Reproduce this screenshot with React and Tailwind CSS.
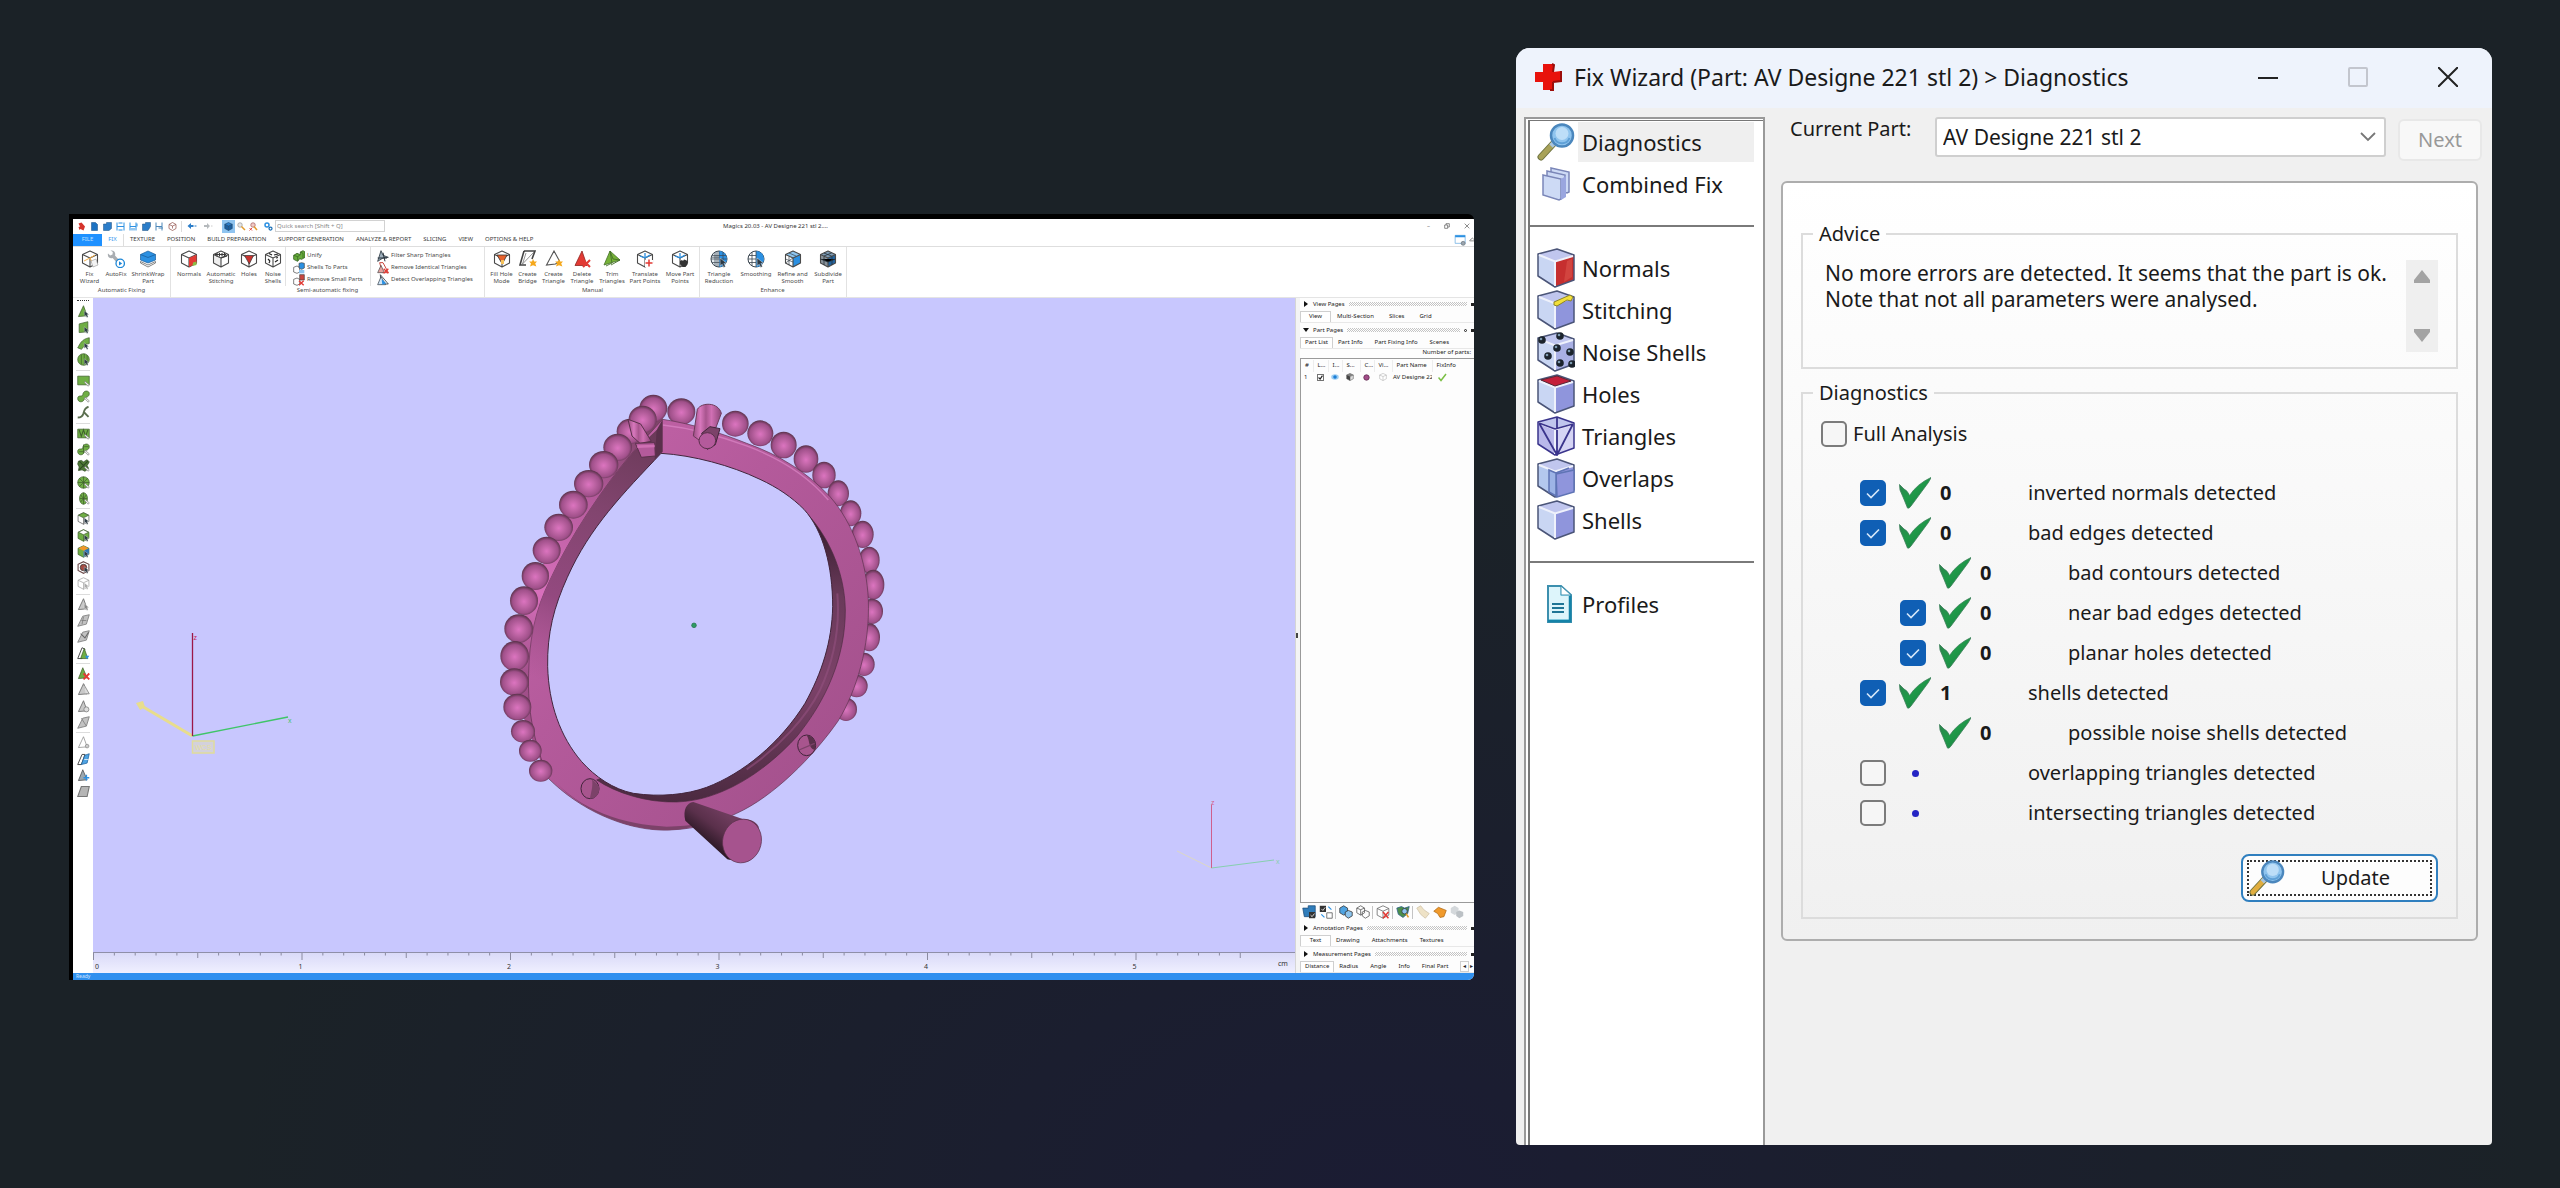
import React, { useState } from 'react';

/* ---------- small icons ---------- */

const HEX = 'M9 1 16.5 4.5V13L9 17 1.5 13V4.5Z';

const Cube = ({ top = '#fff', left = '#fff', right = '#fff', line = '#4a4a4a', size = 'w-[18px] h-[18px]', children }) => (
  <svg viewBox="0 0 18 18" className={`${size} shrink-0`}>
    <path d="M9 1 16.5 4.5 9 8 1.5 4.5Z" fill={top} />
    <path d="M1.5 4.5 9 8V17L1.5 13Z" fill={left} />
    <path d="M16.5 4.5 9 8V17L16.5 13Z" fill={right} />
    <path d={`${HEX}M1.5 4.5 9 8 16.5 4.5M9 8V17`} fill="none" stroke={line} strokeWidth="1.1" strokeLinejoin="round" />
    {children}
  </svg>
);

const Svg = ({ size = 'w-[18px] h-[18px]', children }) => (
  <svg viewBox="0 0 18 18" className={`${size} shrink-0`}>
    {children}
  </svg>
);

const Star = ({ x, y }) => (
  <path
    d={`M${x} ${y - 4}l1.2 2.6 2.8-.2-1.8 2.2 1.2 2.8-3.4-1.2-3 1.2 1-2.8-1.8-2.2 2.8.2Z`}
    fill="#f5a81c"
  />
);

const Cursor = ({ x = 10, y = 8, fill = '#2d3a45' }) => (
  <path d={`M${x} ${y}l6.5 5-2.6.4 1.6 3.2-1.8.8-1.5-3.2-2 1.8Z`} fill={fill} stroke="#fff" strokeWidth=".4" />
);

const ribbonIcons = {
  fixWizard: (
    <Cube>
      <path d="M3 11 9 8l5-3M9 8l3 6" stroke="#f5b04a" strokeWidth="1" fill="none" />
      <path d="M10 11l5-2 2 6-5 2Z" fill="#f3f3f3" stroke="#999" strokeWidth=".6" />
    </Cube>
  ),
  autoFix: (
    <Svg>
      <path d="M1 3.5 3.2 5.5 5.5 4.6 5.8 2 3.5 0.6C7 0 9 2.6 8 5.6L13 11l-2.4 2.4L5.6 8C2.6 9 .2 6.5 1 3.5Z" fill="#a9adb1" />
      <circle cx="13.2" cy="13.4" r="4.2" fill="#fff" stroke="#1c86d6" strokeWidth="1.3" />
      <path d="M12 11.3v4.2l3.2-2.1Z" fill="#1c86d6" />
    </Svg>
  ),
  shrinkWrap: (
    <Svg>
      <path d="M9 1 16.5 4.5V10L9 13 1.5 10V4.5Z" fill="#2b90e2" stroke="#1b5f9c" strokeWidth=".7" />
      <path d="M1.5 4.5 9 7.5 16.5 4.5" stroke="#1b5f9c" strokeWidth=".8" fill="none" />
      <path d="M1.5 11.5V13L9 17l7.500-4v-1.500L9 15Z" fill="#fff" stroke="#777" strokeWidth=".9" />
    </Svg>
  ),
  normals: (
    <Cube>
      <path d="M9 8 16.500 4.800V13.500L9 17Z" fill="#e23a34" />
      <path d="M13 12.500l3.500-1V15L12.500 16Z" fill="#8bbd45" />
    </Cube>
  ),
  stitching: (
    <Cube left="#eee">
      <path d="M3 4.500h11M5 3v3.500M7.500 3v3.500M10 3v3.500M12.500 3v3.500M9 8l6-2" stroke="#3a3a3a" strokeWidth="1.100" />
    </Cube>
  ),
  holes: (
    <Cube>
      <path d="M4.500 5.500h9L9.300 14Z" fill="#c8322e" stroke="#333" strokeWidth=".7" />
    </Cube>
  ),
  noise: (
    <Cube>
      <path d="M5 3.500l3 1.500M10 5l4-1M4 9l2 2M11 12l3-2M12 8l2-.5M5 13l1-2" stroke="#222" strokeWidth="1.200" />
    </Cube>
  ),
  fillHole: (
    <Cube>
      <path d="M4 5h10L9.300 14Z" fill="#e8622c" stroke="#333" strokeWidth=".8" />
      <path d="M8 10h3v4H8Z" fill="#f6c15a" />
    </Cube>
  ),
  bridge: (
    <Svg>
      <path d="M5 1h11L13 9M5 1 1 15h6" stroke="#444" strokeWidth="1.600" fill="none" />
      <path d="M7 3 3.500 14 15 2" stroke="#777" strokeWidth=".8" fill="none" />
      <Star x={14} y={13} />
    </Svg>
  ),
  createTriangle: (
    <Svg>
      <path d="M9 1 1.500 15l9-1 4-3Z" fill="#fff" stroke="#555" strokeWidth="1.100" />
      <Star x={14} y={13} />
    </Svg>
  ),
  deleteTriangle: (
    <Svg>
      <path d="M9 1 2 15.500h12Z" fill="#e23a34" stroke="#8f2621" strokeWidth=".8" />
      <path d="M10 10l7 7M17 10l-7 7" stroke="#e23a34" strokeWidth="2" />
    </Svg>
  ),
  trim: (
    <Svg>
      <path d="M7 1 17 10 1 15Z" fill="#76b238" stroke="#45702a" strokeWidth=".8" />
      <path d="M7 1 9 13 3 16M7 1l3 8 7 1-9 5" stroke="#45702a" strokeWidth=".9" fill="none" />
    </Svg>
  ),
  translate: (
    <Cube>
      <path d="M9 8V3M9 8l5-3M9 8 4 6" stroke="#2b90e2" strokeWidth="1.300" />
      <path d="M9 10h8v7H9Z" fill="#fff" />
      <path d="M13 9.500v7M9.500 13h7" stroke="#e23a34" strokeWidth="1.500" />
    </Cube>
  ),
  movePoints: (
    <Cube>
      <path d="M9 8V3M9 8l5-3M9 8 4 6" stroke="#2b90e2" strokeWidth="1.300" />
      <path d="M9 11l2-1 1 1 1-1.500 1.500.5 2 1v3.500L14.500 17h-3L9 14Z" fill="#333" />
    </Cube>
  ),
  reduction: (
    <Svg>
      <circle cx="9" cy="9" r="8" fill="#e4ebf0" stroke="#3b4650" />
      <path d="M9 1a8 8 0 0 1 0 16Z" fill="#2b90e2" />
      <path d="M9 1v16M5 2v14M13 2v14M1 9h16M2 5.500h14M2 12.500h14M7 1.500v15M2 7.200h7" stroke="#3b4650" strokeWidth=".7" />
      <Cursor />
    </Svg>
  ),
  smoothing: (
    <Svg>
      <circle cx="9" cy="9" r="8" fill="#fff" stroke="#3b4650" />
      <path d="M9 1a8 8 0 0 1 0 16Z" fill="#2b90e2" />
      <path d="M9 1v16M5 2v14M1 9h8M2 5.500h7M2 12.500h7" stroke="#3b4650" strokeWidth=".8" />
      <Cursor />
    </Svg>
  ),
  refine: (
    <Cube right="#2b90e2" top="#8cc4ee">
      <path d="M1.500 9 9 12M5 3 12 6M5 6.500V15M1.500 13 9 8" stroke="#3b4650" strokeWidth=".7" />
    </Cube>
  ),
  subdivide: (
    <Cube left="#8a939b" right="#2464a0" top="#7e9bb5">
      <path d="M1.500 9 9 12l7.500-3M5 3l7.500 3M5 6.500V15M13 6.500V15M12.500 3 5 6" stroke="#26323c" strokeWidth=".8" />
    </Cube>
  ),
};

const SMALL = 'w-[12px] h-[12px]';

const smallIcons = {
  unify: (
    <Svg size={SMALL}>
      <path d="M1 8l5-3 5 2V3l4-2 3 2v8l-5 3-3-1-3 4-6-3Z" fill="#67ab3c" stroke="#31601c" strokeWidth="1.200" />
      <path d="M1 8l6 2 4-3M7 10v6M11 3l4 2v7" stroke="#31601c" fill="none" />
    </Svg>
  ),
  shells: (
    <Svg size={SMALL}>
      <path d="M1 8l5-2 4 2v7l-4 2-5-2Z" fill="#fff" stroke="#444" />
      <path d="M9 2l4-1 4 1v7l-4 2-4-2Z" fill="#2b90e2" stroke="#444" />
      <path d="M9 12h8v5H9Z" fill="#8cc4ee" />
    </Svg>
  ),
  removeSmall: (
    <Svg size={SMALL}>
      <path d="M1 8l5-2 4 2v7l-4 2-5-2Z" fill="#fff" stroke="#444" />
      <path d="M10 1h7v8h-7Z" fill="#c9473f" stroke="#444" />
      <path d="M9 10l7 7M16 10l-7 7" stroke="#e23a34" strokeWidth="2" />
    </Svg>
  ),
  sharp: (
    <Svg size={SMALL}>
      <path d="M6 1 1 17l8-5 8-1-8-3Z" fill="#9fb0bd" stroke="#26323c" strokeWidth="1.200" />
      <path d="M9 4l3 13M1 12h14" stroke="#26323c" strokeWidth="1.500" />
    </Svg>
  ),
  identical: (
    <Svg size={SMALL}>
      <path d="M4 1h5l8 15H8Z" fill="#fff" stroke="#c9473f" strokeWidth="1.500" />
      <path d="M1 16 6 5l5 11Z" fill="#e4a29e" stroke="#444" />
      <path d="M10 10l7 7M17 10l-7 7" stroke="#e23a34" strokeWidth="2" />
    </Svg>
  ),
  overlapping: (
    <Svg size={SMALL}>
      <path d="M5 1 17 15H6Z" fill="#fff" stroke="#26323c" strokeWidth="1.200" />
      <path d="M1 16 6 4l7 12Z" fill="#cfe5f7" stroke="#26323c" />
      <path d="M7 8l7 6-6 2Z" fill="#2b90e2" />
    </Svg>
  ),
};

/* ---------- quick access bar ---------- */

const QUICK = 'w-[9px] h-[9px]';

const quickIcons = [
  { label: 'Magics', art: <path d="M3 3 9 1l7 8-3 8-6-3-2 2-2-6 3-1Z" fill="#d5332b" /> },
  { label: 'New', art: <path d="M3 1h8l4 4v12H3Z" fill="#1e73c2" stroke="#144d84" /> },
  { label: 'Load', art: <path d="M1 4h6V1h10v12l-5 4H1Z" fill="#2b7dc9" stroke="#1b4f80" /> },
  { label: 'Save', art: <path d="M2 1v16M16 1v16M2 9h14M5 2h8M5 16h8" stroke="#2b90e2" strokeWidth="2" fill="none" /> },
  { label: 'Save as', art: <path d="M2 1v16M14 1v16M2 9h12M6 12v5M10 12v5M16 3v6" stroke="#2b90e2" strokeWidth="2" fill="none" /> },
  { label: 'Import part', art: <path d="M1 4h6V1h10v8l-5 8H1Z" fill="#2b7dc9" stroke="#1b4f80" /> },
  { label: 'Save part', art: <path d="M2 1v16M14 1v16M2 9h12M7 12h9" stroke="#4d87b9" strokeWidth="2" fill="none" /> },
  { label: 'Unload part', art: <path d="M9 1 16 5v8l-7 4-7-4V5ZM2 5l7 3 7-3M9 8v5" stroke="#8d4b45" strokeWidth="1.400" fill="none" /> },
];

const ribbonTabs = [
  'TEXTURE',
  'POSITION',
  'BUILD PREPARATION',
  'SUPPORT GENERATION',
  'ANALYZE & REPORT',
  'SLICING',
  'VIEW',
  'OPTIONS & HELP',
];

const QuickAccessBar = () => (
  <div className="flex h-[15px] items-center pl-1 text-[6px] leading-[7px] text-[#444]">
    <div className="flex items-center gap-1">
      {quickIcons.map(({ label, art }) => (
        <button key={label} aria-label={label}>
          <Svg size={QUICK}>{art}</Svg>
        </button>
      ))}
    </div>
    <span className="mx-1 h-[11px] w-px bg-[#dcdcdc]" />
    <button aria-label="Undo" className="mr-1">
      <Svg size="w-[12px] h-[9px]">
        <path d="M0 8l7-6v4h5v4H7v4Z" fill="#2b7dc9" />
        <path d="M14 8h4" stroke="#2b7dc9" strokeWidth="2" />
      </Svg>
    </button>
    <button aria-label="Redo">
      <Svg size="w-[12px] h-[9px]">
        <path d="M13 8 7 2v4H1v4h6v4Z" fill="#b5b9bc" />
        <path d="M15 8h3" stroke="#ccc" strokeWidth="2" />
      </Svg>
    </button>
    <button aria-label="Shaded view" className="ml-2 grid h-[13px] w-[13px] place-items-center bg-[#8fc4f0]">
      <Cube size={QUICK} top="#2b7dc9" left="#1d5f9e" right="#1d5f9e" line="#163f66" />
    </button>
    <button aria-label="Zoom" className="ml-[2px]">
      <Svg size={QUICK}>
        <circle cx="6" cy="6" r="4.500" fill="#e6e6e6" stroke="#999" strokeWidth="1.500" />
        <path d="M9 9l7 7" stroke="#e39b2b" strokeWidth="3" />
      </Svg>
    </button>
    <button aria-label="Unzoom" className="ml-[3px]">
      <Svg size={QUICK}>
        <circle cx="8" cy="6" r="4.500" fill="#f0c9c5" stroke="#a66" strokeWidth="1.500" />
        <path d="M10 9l6 7" stroke="#e39b2b" strokeWidth="3" />
        <path d="M1 12l5 5M6 12l-5 5" stroke="#e23a34" strokeWidth="1.800" />
      </Svg>
    </button>
    <button aria-label="Settings" className="ml-[6px]">
      <Svg size={QUICK}>
        <circle cx="6" cy="6" r="4" fill="none" stroke="#2b90e2" strokeWidth="3" />
        <circle cx="13" cy="13" r="3" fill="none" stroke="#1b6fb5" strokeWidth="2.500" />
      </Svg>
    </button>
    <input
      aria-label="Quick search"
      placeholder="Quick search [Shift + Q]"
      className="ml-[2px] h-[12px] w-[110px] border border-[#d2d2d2] bg-white px-px text-[6px] leading-[7px] placeholder:text-[#8a8a8a]"
    />
    <p className="flex-1 text-center text-[#333]">Magics 20.03 - AV Designe 221 stl 2....</p>
    <div className="flex w-[308px] justify-end gap-[14px] pr-1 text-[#666]">
      <button aria-label="Minimize">–</button>
      <button aria-label="Restore">
        <Svg size="w-[6px] h-[6px]">
          <path d="M2 6h9v10H2ZM6 6V2h10v10h-5" fill="none" stroke="#555" strokeWidth="2" />
        </Svg>
      </button>
      <button aria-label="Close">
        <Svg size="w-[6px] h-[6px]">
          <path d="M2 2l14 14M16 2 2 16" stroke="#555" strokeWidth="2" />
        </Svg>
      </button>
    </div>
  </div>
);

const RibbonTabs = () => (
  <div className="flex h-[13px] items-stretch border-b border-[#dedede] text-[6px] leading-[7px] text-[#3c3c3c]">
    <button className="w-[29px] bg-[#1f91ff] text-[#bfe0ff]">FILE</button>
    <button className="w-[22px] border-r border-[#dedede] text-[#3d9bf0]">FIX</button>
    <div className="flex items-center gap-[12px] pl-[6px]">
      {ribbonTabs.map((tab) => (
        <button key={tab}>{tab}</button>
      ))}
    </div>
    <button aria-label="Interface layout" className="mr-[2px] ml-auto">
      <Svg size="w-[13px] h-[12px]">
        <path d="M1 2h15v12H1Z" fill="#fff" stroke="#5aa5e0" />
        <path d="M1 2h15v3H1Z" fill="#2b90e2" />
        <circle cx="13" cy="14" r="3" fill="#9aa4ad" stroke="#66717a" />
      </Svg>
    </button>
    <button aria-label="Collapse ribbon">
      <Svg size="w-[5px] h-[5px]">
        <path d="M1 14 12 4l5 4M4 14h14" fill="none" stroke="#555" strokeWidth="2.500" />
      </Svg>
    </button>
  </div>
);

const RibbonButton = ({ icon, lines, width }) => (
  <button className={`flex ${width} flex-col items-center gap-[3px] pt-[3px]`}>
    {ribbonIcons[icon]}
    <span className="whitespace-nowrap">
      {lines.map((line) => (
        <span key={line} className="block">{line}</span>
      ))}
    </span>
  </button>
);

const RibbonGroup = ({ title, className = '', children }) => (
  <section className={`flex flex-col border-r border-[#e2e2e2] ${className}`}>
    <div className="flex h-[39px]">{children}</div>
    <h3 className="text-center leading-[9px]">{title}</h3>
  </section>
);

const SmallButtons = ({ items, className = '' }) => (
  <div className={`flex flex-col pt-[3px] ${className}`}>
    {items.map(([icon, label]) => (
      <button key={icon} className="flex h-[12px] items-center gap-[2px] whitespace-nowrap">
        {smallIcons[icon]}
        {label}
      </button>
    ))}
  </div>
);

const Ribbon = () => (
  <div className="flex h-[51px] border-b border-[#e4e4e4] text-[6px] leading-[7px] text-[#4c4c4c]">
    <RibbonGroup title="Automatic Fixing" className="pr-[3px] pl-[3px]">
      <RibbonButton icon="fixWizard" lines={['Fix', 'Wizard']} width="w-[27px]" />
      <RibbonButton icon="autoFix" lines={['AutoFix']} width="w-[26px]" />
      <RibbonButton icon="shrinkWrap" lines={['ShrinkWrap', 'Part']} width="w-[38px]" />
    </RibbonGroup>
    <RibbonGroup title="Semi-automatic fixing">
      <RibbonButton icon="normals" lines={['Normals']} width="w-[36px]" />
      <RibbonButton icon="stitching" lines={['Automatic', 'Stitching']} width="w-[28px]" />
      <RibbonButton icon="holes" lines={['Holes']} width="w-[28px]" />
      <RibbonButton icon="noise" lines={['Noise', 'Shells']} width="w-[20px]" />
      <SmallButtons
        className="ml-[2px] w-[86px] border-r border-l border-[#e2e2e2] pl-[7px]"
        items={[
          ['unify', 'Unify'],
          ['shells', 'Shells To Parts'],
          ['removeSmall', 'Remove Small Parts'],
        ]}
      />
      <SmallButtons
        className="w-[113px] pl-[6px]"
        items={[
          ['sharp', 'Filter Sharp Triangles'],
          ['identical', 'Remove Identical Triangles'],
          ['overlapping', 'Detect Overlapping Triangles'],
        ]}
      />
    </RibbonGroup>
    <RibbonGroup title="Manual" className="pr-px pl-[2px]">
      <RibbonButton icon="fillHole" lines={['Fill Hole', 'Mode']} width="w-[29px]" />
      <RibbonButton icon="bridge" lines={['Create', 'Bridge']} width="w-[23px]" />
      <RibbonButton icon="createTriangle" lines={['Create', 'Triangle']} width="w-[29px]" />
      <RibbonButton icon="deleteTriangle" lines={['Delete', 'Triangle']} width="w-[28px]" />
      <RibbonButton icon="trim" lines={['Trim', 'Triangles']} width="w-[32px]" />
      <RibbonButton icon="translate" lines={['Translate', 'Part Points']} width="w-[34px]" />
      <RibbonButton icon="movePoints" lines={['Move Part', 'Points']} width="w-[36px]" />
    </RibbonGroup>
    <RibbonGroup title="Enhance" className="pr-px">
      <RibbonButton icon="reduction" lines={['Triangle', 'Reduction']} width="w-[38px]" />
      <RibbonButton icon="smoothing" lines={['Smoothing']} width="w-[36px]" />
      <RibbonButton icon="refine" lines={['Refine and', 'Smooth']} width="w-[37px]" />
      <RibbonButton icon="subdivide" lines={['Subdivide', 'Part']} width="w-[34px]" />
    </RibbonGroup>
  </div>
);

/* ---------- marking toolbar ---------- */

const GREEN = '#6fae44';
const DARK = '#3f5f2c';
const wand = <path d="M11 10l6 5-1.500 2-5-5Z" fill="#eee" stroke="#777" strokeWidth=".8" />;
const grayTriangle = <path d="M9 1 2 16l12-1Z" fill="#c9c9c9" stroke="#777" strokeWidth="1.300" />;
const graySheet = <path d="M8 3 17 1 13 14 1 17Z" fill="#c2c2c2" stroke="#808080" strokeWidth="1.200" />;

const markingTools = [
  <><path d="M9 1 2 16l12-1Z" fill={GREEN} stroke={DARK} /><Cursor /></>,
  <><path d="M3 4 15 1v14L3 16Z" fill={GREEN} stroke={DARK} /><Cursor /></>,
  <><path d="M1 15C4 10 6 3 17 1v8C11 9 9 15 6 17Z" fill={GREEN} stroke={DARK} /><Cursor /></>,
  <><circle cx="9" cy="9" r="8" fill={GREEN} stroke={DARK} /><path d="M6 2v14M10 1v16M14 3v10" stroke={DARK} /><Cursor /></>,
  null,
  <><path d="M1 3h16v12H1Z" fill={GREEN} stroke={DARK} />{wand}</>,
  <><path d="M1 12c0-6 6-2 7-5 0-7 9-7 9-2 0 6-6 4-7 8-2 5-9 4-9-1Z" fill={GREEN} stroke={DARK} />{wand}</>,
  <path d="M1 16c5 0 7-2 8-6 1-5 3-8 7-9M10 9l6 6" fill="none" stroke="#5c6f50" strokeWidth="2.600" />,
  null,
  <><path d="M1 3h16v12H1Z" fill={GREEN} stroke={DARK} /><path d="M3 4l3 9 3-9 3 9 3-9" stroke={DARK} fill="none" strokeWidth="1.500" />{wand}</>,
  <><path d="M1 12c0-6 6-2 7-5 0-7 9-7 9-2 0 6-6 4-7 8-2 5-9 4-9-1Z" fill={GREEN} stroke={DARK} /><path d="M3 12h6M10 5h6M9 2v12" stroke={DARK} />{wand}</>,
  <><path d="M2 3 6 2 9 4l5-3 3 3-3 5 2 4-5 4-4-2-5 1 1-5-2-4Z" fill="#4e7a35" stroke="#2e4a22" /><path d="M3 3l12 12M15 3 3 15" stroke="#2e4a22" strokeWidth="1.500" />{wand}</>,
  <><circle cx="9" cy="9" r="8" fill={GREEN} stroke={DARK} /><path d="M9 1v16M1 9h16M3 3l12 12M15 3 3 15" stroke={DARK} />{wand}</>,
  <><ellipse cx="9" cy="9" rx="5.500" ry="8" fill={GREEN} stroke={DARK} /><path d="M9 1v16M4 9h10M5 4l8 10M13 4 5 14" stroke={DARK} />{wand}</>,
  null,
  <><path d={HEX} fill="#fff" stroke="#555" /><path d="M9 1 16 4.500 9 8 2 4.500Z" fill={GREEN} stroke={DARK} /><path d="M9 8v9" stroke="#555" /><Cursor /></>,
  <><path d={HEX} fill={GREEN} stroke={DARK} /><path d="M9 1 16 4.500 9 8 2 4.500Z" fill="#fff" stroke={DARK} /><path d="M9 8v9" stroke={DARK} /><Cursor /></>,
  <><path d={HEX} fill={GREEN} stroke={DARK} /><path d="M9 8l7.500-3.500V13L9 17Z" fill="#2f76b8" /><path d="M9 1 16 4.500 9 8 2 4.500Z" fill="#f0982c" /><Cursor /></>,
  <><path d={HEX} fill="#fff" stroke="#6b4a4a" strokeWidth="1.500" /><circle cx="9" cy="9" r="4.500" fill="#a34a42" stroke="#333" /><Cursor /></>,
  <><path d={`${HEX}M1.500 4.500 9 8l7.500-3.500M9 8v9`} fill="#fff" stroke="#9d9d9d" /><Cursor fill="#aaa" /></>,
  null,
  <>{grayTriangle}<Cursor fill="#888" /></>,
  <>{graySheet}<path d="M9 4 7 14M6 9h7" stroke="#777" /></>,
  <>{graySheet}<path d="M5 5l6 6 5-8" stroke="#666" strokeWidth="1.500" fill="none" /></>,
  <><path d="M7 1 1 16h6L11 3Z" fill="#fff" stroke="#444" strokeWidth="1.300" /><path d="M10 2 5 16h10Z" fill={GREEN} stroke={DARK} /><path d="M11 12h6l-3 5Z" fill="#2b90e2" /></>,
  null,
  <><path d="M8 1 2 16l12-1Z" fill={GREEN} stroke={DARK} /><path d="M9 9l8 8M17 9l-8 8" stroke="#e23a34" strokeWidth="2.500" /></>,
  <>{grayTriangle}<path d="M9 1l8 14h-5" fill="#ddd" stroke="#777" /></>,
  <>{grayTriangle}<circle cx="13" cy="13" r="3.500" fill="#ddd" stroke="#777" /></>,
  <>{graySheet}<path d="M6 3l7 11" stroke="#777" /></>,
  null,
  <><path d="M9 1 2 16l12-1Z" fill="#fff" stroke="#888" /><circle cx="14" cy="14" r="2.500" fill="#ccc" stroke="#888" /></>,
  <><path d="M7 2 1 16h5L11 2Z" fill="#fff" stroke="#444" strokeWidth="1.300" /><path d="M11 3 17 1l-3 13-8 2Z" fill="#4ea3e2" stroke="#1b5f9c" /><path d="M10 9h6" stroke="#fff" /></>,
  <><path d="M8 1 2 16l12-1Z" fill="#9aa7b0" stroke="#444" /><path d="M9 12h8M13 8v8" stroke="#2b90e2" strokeWidth="2" /></>,
  <path d="M6 2h11l-3 14H1Z" fill="#b5b5b5" stroke="#777" strokeWidth="1.500" />,
];

const MarkingToolbar = () => (
  <div className="flex w-5 shrink-0 flex-col items-center bg-white pt-px">
    <span className="mt-px mb-1 w-3 border-t border-dotted border-[#333]" />
    <div className="flex h-[494px] flex-col items-center justify-between">
      {markingTools.map((art, i) =>
        art ? (
          <button key={i} aria-label={`Marking tool ${i + 1}`}>
            <Svg size="w-[13px] h-[13px]">{art}</Svg>
          </button>
        ) : (
          <span key={i} className="h-px w-[14px] bg-[#dcdcdc]" />
        )
      )}
    </div>
  </div>
);

/* ---------- 3D view ---------- */

const rightBeads = [
  [604, 95, 42, 40], [766, 131, 40, 39], [841, 160, 39, 39], [911, 195, 39, 40], [978, 237, 37, 41],
  [1032, 285, 35, 40], [1075, 340, 32, 39], [1112, 400, 32, 39], [1148, 463, 33, 41], [1168, 540, 31, 40],
  [1180, 614, 33, 45], [1176, 694, 33, 38], [1168, 772, 32, 42], [1152, 853, 32, 35], [1130, 918, 33, 34],
  [1098, 988, 33, 35],
];

const leftBeads = [
  [520, 85, 42, 41], [450, 154, 40, 38], [488, 118, 42, 41], [413, 202, 43, 41], [371, 254, 44, 41], [326, 311, 44, 41],
  [280, 374, 43, 42], [236, 442, 43, 41], [200, 511, 42, 41], [166, 588, 41, 42], [132, 662, 42, 43],
  [116, 746, 43, 43], [104, 828, 43, 45], [103, 906, 43, 41], [112, 981, 42, 40], [129, 1054, 36, 34],
  [151, 1112, 34, 33], [182, 1172, 35, 33],
];

const Bead = ({ bead: [cx, cy, rx, ry] }) => <ellipse cx={cx} cy={cy} rx={rx} ry={ry} fill="url(#bead)" />;

const Ring = () => (
  <g transform="translate(387 82) scale(.33333)">
    <defs>
      <radialGradient id="bead" cx=".5" cy=".53" r=".52">
        <stop offset="0" stopColor="#dc74c0" />
        <stop offset=".35" stopColor="#c166a7" />
        <stop offset=".78" stopColor="#a0508a" />
        <stop offset="1" stopColor="#5c334c" />
      </radialGradient>
      <linearGradient id="face" x1="0" y1="0" x2="1" y2="1">
        <stop offset="0" stopColor="#c665ab" />
        <stop offset=".4" stopColor="#b45a9b" />
        <stop offset="1" stopColor="#a04f89" />
      </linearGradient>
      <linearGradient id="arm" gradientUnits="userSpaceOnUse" x1="520" y1="160" x2="180" y2="900">
        <stop offset="0" stopColor="#6b3a59" />
        <stop offset=".35" stopColor="#82456f" />
        <stop offset=".7" stopColor="#93497f" />
        <stop offset="1" stopColor="#a04f89" stopOpacity="0" />
      </linearGradient>
      <linearGradient id="side" gradientUnits="userSpaceOnUse" x1="500" y1="150" x2="150" y2="900">
        <stop offset="0" stopColor="#7e4469" />
        <stop offset=".3" stopColor="#b45a9b" />
        <stop offset=".7" stopColor="#d870bc" />
        <stop offset="1" stopColor="#a04f89" />
      </linearGradient>
      <linearGradient id="wall" x1="0" y1="0" x2="0" y2="1">
        <stop offset="0" stopColor="#2c1826" />
        <stop offset=".3" stopColor="#6a3a5a" />
        <stop offset=".6" stopColor="#7c4269" />
        <stop offset="1" stopColor="#4b2a40" />
      </linearGradient>
      <linearGradient id="cone" gradientUnits="userSpaceOnUse" x1="720" y1="1290" x2="660" y2="1370">
        <stop offset="0" stopColor="#6e3c5d" />
        <stop offset=".5" stopColor="#5a304b" />
        <stop offset="1" stopColor="#2f1a28" />
      </linearGradient>
      <linearGradient id="roll" x1="0" y1="0" x2="1" y2="0">
        <stop offset="0" stopColor="#9a4d82" />
        <stop offset=".25" stopColor="#d878bd" />
        <stop offset=".45" stopColor="#a8558e" />
        <stop offset=".65" stopColor="#d070b4" />
        <stop offset="1" stopColor="#8b4576" />
      </linearGradient>
    </defs>

    {rightBeads.map((bead) => (
      <Bead key={bead.join()} bead={bead} />
    ))}

    {/* outer side of the left arm */}
    <path d="M548 110 430 180 250 420 150 640 110 800 118 980 200 1190 300 1200 200 800 548 215Z" fill="url(#side)" />

    {/* band */}
    <path
      d="M548 118C640 132 725 160 800 190C900 225 985 280 1050 350C1120 430 1160 545 1165 660C1170 800 1130 930 1075 1022C1000 1130 880 1250 770 1300C700 1335 620 1352 540 1350C430 1346 300 1290 205 1195C160 1080 142 990 146 880C148 780 165 690 210 600C270 470 370 320 460 215Z"
      fill="url(#face)"
      stroke="#5a304b"
      strokeWidth="2"
    />
    <path d="M215 1195C300 1290 430 1335 560 1340C600 1340 630 1336 660 1330C620 1350 580 1352 540 1350C430 1346 300 1290 215 1195Z" fill="#7c4269" />
    <path d="M548 135C640 145 725 170 800 198C900 235 985 290 1045 360" fill="none" stroke="#dc86c6" strokeWidth="4" opacity=".7" />
    <path
      d="M530 150 460 215C370 320 270 470 210 600C165 690 148 780 146 880C143 960 152 1030 170 1090L230 1060L205 860L240 640L430 350L543 222V150Z"
      fill="url(#arm)"
    />
    <path d="M548 118 530 150 524 238 548 215Z" fill="#5a304b" />

    {/* inner wall */}
    <path
      d="M965 384C1045 462 1094 575 1096 690C1096 830 1040 960 950 1070C850 1180 720 1262 590 1266C500 1268 410 1240 350 1200L600 1100L900 700Z"
      fill="url(#wall)"
      stroke="#4b2a40"
      strokeWidth="2"
    />
    <path d="M1072 640C1080 740 1062 840 1020 930C980 1010 900 1100 800 1168" fill="none" stroke="#93507f" strokeWidth="6" opacity=".6" />

    {/* opening */}
    <path
      d="M543 220C640 226 752 256 840 298C892 322 936 352 972 388C1030 452 1058 560 1058 680C1056 785 1025 880 975 970C900 1090 790 1180 680 1222C620 1244 540 1252 460 1240C400 1228 345 1190 305 1145C240 1070 206 970 203 860C201 760 222 680 262 592C330 440 430 340 543 220Z"
      fill="#c8c7fe"
      stroke="#41243a"
      strokeWidth="3"
    />

    {leftBeads.map((bead) => (
      <Bead key={bead.join()} bead={bead} />
    ))}

    {/* prongs */}
    <path d="M652 88C665 66 715 66 724 100L705 150 660 182 640 168Z" fill="url(#roll)" stroke="#6b3a59" strokeWidth="3" />
    <path d="M665 160 690 140 720 146 706 194 682 208Z" fill="#7c4269" stroke="#41243a" strokeWidth="3" />
    <ellipse cx="682" cy="182" rx="25" ry="24" fill="#b45a9b" stroke="#5a304b" strokeWidth="3" />
    <path d="M444 118 482 132 514 184 480 190 456 168Z" fill="url(#roll)" stroke="#5a304b" strokeWidth="3" />
    <path d="M466 190 524 188 526 228 484 232Z" fill="#b45a9b" stroke="#5a304b" strokeWidth="3" />
    <path d="M472 200 524 198" stroke="#d070b4" strokeWidth="8" />

    {/* drilled holes */}
    <ellipse cx="980" cy="1096" rx="27" ry="31" fill="#a8558e" stroke="#41243a" strokeWidth="3" />
    <path d="M980 1066C990 1080 984 1105 1004 1110C1012 1085 1000 1068 980 1066Z" fill="#5a304b" />
    <path d="M957 1110 1004 1090" stroke="#7c4269" strokeWidth="4" />
    <ellipse cx="330" cy="1226" rx="27" ry="30" fill="#a8558e" stroke="#41243a" strokeWidth="3" />
    <path d="M336 1197C340 1220 332 1240 330 1256C352 1254 360 1240 357 1218Z" fill="#7c4269" />

    {/* sprue */}
    <path d="M640 1266C620 1268 608 1290 616 1322L742 1438C780 1450 840 1400 836 1340C826 1322 810 1318 790 1318Z" fill="url(#cone)" />
    <ellipse cx="786" cy="1383" rx="58" ry="66" transform="rotate(14 786 1383)" fill="#a6538e" stroke="#5a304b" strokeWidth="2" />

    <circle cx="642" cy="736" r="7" fill="#2f9a63" stroke="#1f6f48" strokeWidth="2" />
  </g>
);

const Axes = () => (
  <>
    <g fill="none">
      <path d="M99.500 438 47 407" stroke="#e8dd8c" strokeWidth="3" />
      <path d="M43 405l7-2 2 6-5 3Z" fill="#e8dd8c" />
      <path d="M99.500 438 195 419" stroke="#3fc568" strokeWidth="1.300" />
      <path d="M99.500 335v103" stroke="#9c1747" strokeWidth="1.300" />
      <path d="M99.500 443h21.500v12H99.500Z" fill="#d3d1dc" stroke="#e0dc9c" strokeWidth="1.500" />
    </g>
    <g fontFamily="Liberation Sans, sans-serif" fontSize="7">
      <text x="100.500" y="342" fill="#c6265a">z</text>
      <text x="195" y="425" fill="#3fc568">x</text>
      <text x="102" y="452" fill="#e4df9f">WCS</text>
    </g>
    <g fill="none" strokeWidth="1">
      <path d="M1118.500 570 1084 553" stroke="#dcd8c4" />
      <path d="M1118.500 570 1181 562" stroke="#86cfae" />
      <path d="M1118.500 507v63" stroke="#cf5f8c" />
    </g>
    <g fontFamily="Liberation Sans, sans-serif" fontSize="7">
      <text x="1118" y="507" fill="#d3608b">z</text>
      <text x="1183" y="566" fill="#86cfae">x</text>
    </g>
  </>
);

const Viewport = () => (
  <div className="min-w-0 flex-1">
    <svg viewBox="0 0 1202 654" className="block w-full bg-[#c8c7fe]">
      <Ring />
      <Axes />
    </svg>
    <svg viewBox="0 0 1202 20" className="block w-full border-t border-[#8f8fa8] bg-linear-to-b from-[#dadaf8] to-[#f0f0ff]">
      {Array.from({ length: 56 }, (_, i) => (
        <path key={i} d={`M${i * 20.85 + 0.5} 0v${i % 10 === 0 ? 7 : i % 5 === 0 ? 5 : 2.5}`} stroke="#8a8aa0" />
      ))}
      <g fontFamily="Noto Sans, sans-serif" fontSize="7" fill="#333">
        {[0, 1, 2, 3, 4, 5].map((n) => (
          <text key={n} x={n * 208.5 + (n ? -3 : 2)} y="16">{n}</text>
        ))}
        <text x="1185" y="13">cm</text>
      </g>
    </svg>
  </div>
);

/* ---------- docked pages ---------- */

const PageHeader = ({ title, open, pinned }) => (
  <div className="flex h-[13px] items-center gap-1 pl-[3px]">
    <svg viewBox="0 0 6 6" className="h-[6px] w-[6px] shrink-0">
      <path d={open ? 'M0 1h6L3 5Z' : 'M1 0v6l4-3Z'} fill="#111" />
    </svg>
    <h4 className="whitespace-nowrap">{title}</h4>
    <span className="h-[4px] flex-1 bg-[repeating-conic-gradient(#c4c4c4_0_25%,#fff_0_50%)] bg-size-[2px_2px]" />
    {pinned && <span className="h-[3px] w-[3px] rounded-full border border-[#222]" />}
    <span className="h-[3px] w-[3px] bg-[#222]" />
  </div>
);

const PageTabs = ({ tabs, gap, children }) => (
  <div className="flex h-[12px] items-stretch border-b border-[#e8e8e8]">
    {tabs.map((tab, i) => (
      <button
        key={tab}
        className={
          i === 0
            ? 'min-w-[31px] border border-b-0 border-[#cfcfcf] bg-white px-1 whitespace-nowrap'
            : `${gap} whitespace-nowrap`
        }
      >
        {tab}
      </button>
    ))}
    {children}
  </div>
);

const pageTools = [
  <><path d="M1 4h7V1h9v14H3Z" fill="#2f7cba" stroke="#1f4f7c" /><path d="M9 9h8v8H9Z" fill="#333" /><path d="M11 13l2 2 3-4" stroke="#fff" fill="none" /></>,
  <><path d="M1 1h8v8H1Z" fill="#333" /><path d="M3 5l2 2 3-4" stroke="#fff" fill="none" /><path d="M10 10h7v7h-7Z" fill="#fff" stroke="#555" /><path d="M12 2l4 4M3 12l4 4" stroke="#2b90e2" strokeWidth="1.500" /></>,
  null,
  <><path d="M1 4l5-3 5 3v6l-5 3-5-3Z" fill="#4ea3e2" stroke="#333" /><path d="M8 9l4-2 5 2v5l-5 3-4-3Z" fill="#8cc4ee" stroke="#333" /></>,
  <><path d="M1 4l5-3 5 3v6l-5 3-5-3Z" fill="#fff" stroke="#555" /><path d="M8 9l4-2 5 2v5l-5 3-4-3ZM1 4l5 2 5-2M6 6v7" fill="none" stroke="#555" /></>,
  null,
  <><path d={`${HEX}M1.500 4.500 9 8l7.500-3.500M9 8v9`} fill="#fff" stroke="#666" /><path d="M9 9l7 8M16 9l-7 8" stroke="#e23a34" strokeWidth="2" /></>,
  null,
  <><path d="M1 4l6-2 4 2 6-2-2 9-6 5-6-4Z" fill="#4b8f4a" stroke="#2f5e8c" /><circle cx="11" cy="8" r="3.500" fill="#8cc4ee" stroke="#333" /><path d="M13 11l3 5" stroke="#e39b2b" strokeWidth="2" /></>,
  null,
  <><path d="M1 4l5-3 4 5 7 5-5 6-6-5Z" fill="#eee2c6" stroke="#cfc3a8" /></>,
  <><path d="M1 8l6-5 10 4-3 8-5 1-3-5Z" fill="#f09a2c" stroke="#b36c17" /></>,
  <><path d="M1 4l5-3 5 3v6l-5 3-5-3Z" fill="#d4d8db" /><path d="M8 9l4-2 5 2v5l-5 3-4-3Z" fill="#bcc1c5" /></>,
];

const PartTable = () => (
  <div className="flex-1 border-t border-l border-[#9a9a9a]">
    <table className="mt-px w-full table-fixed text-left">
      <colgroup>
        <col className="w-[12px]" />
        <col className="w-[15px]" />
        <col className="w-[14px]" />
        <col className="w-[18px]" />
        <col className="w-[14px]" />
        <col className="w-[18px]" />
        <col className="w-[40px]" />
        <col />
      </colgroup>
      <thead>
        <tr className="h-[12px]">
          {['#', 'L...', 'I...', 'S...', 'C...', 'Vi...', 'Part Name', 'FixInfo'].map((head) => (
            <th key={head} className="overflow-hidden border-r border-[#ededed] pl-1 font-normal whitespace-nowrap last:border-r-0">
              {head}
            </th>
          ))}
        </tr>
      </thead>
      <tbody>
        <tr className="h-[11px]">
          <td className="pl-[3px]">1</td>
          <td className="pl-1">
            <Svg size="w-[7px] h-[7px]">
              <path d="M1 1h16v16H1Z" fill="#fff" stroke="#333" strokeWidth="2" />
              <path d="M4 9l4 4 6-9" stroke="#222" strokeWidth="3" fill="none" />
            </Svg>
          </td>
          <td className="pl-[3px]">
            <Svg size="w-[8px] h-[8px]">
              <ellipse cx="9" cy="9" rx="8.500" ry="6" fill="#9ccdf2" />
              <circle cx="9" cy="9" r="4" fill="#1c7fd6" />
            </Svg>
          </td>
          <td className="pl-1">
            <Cube size="w-[8px] h-[8px]" left="#444" top="#888" right="#ddd" />
          </td>
          <td className="pl-[3px]">
            <Svg size="w-[7px] h-[7px]">
              <circle cx="9" cy="9" r="7" fill="#a34d89" stroke="#5f2c50" strokeWidth="2" />
            </Svg>
          </td>
          <td className="pl-[5px]">
            <Cube size="w-[8px] h-[8px]" line="#a5a5a5" />
          </td>
          <td className="overflow-hidden pl-px whitespace-nowrap">AV Designe 22</td>
          <td className="pl-[6px]">
            <Svg size="w-[9px] h-[9px]">
              <path d="M1 9l5 6L16 2" fill="none" stroke="#7bbf45" strokeWidth="3" />
            </Svg>
          </td>
        </tr>
      </tbody>
    </table>
  </div>
);

const DockedPages = () => (
  <aside className="flex w-[179px] shrink-0 overflow-hidden bg-[#fdfdfd] text-[6px] leading-[7px] text-[#222]">
    <div className="flex w-[5px] items-center border-l border-[#d5d5d5] bg-[#f4f4f4]">
      <span className="h-[5px] w-[2px] bg-[#444]" />
    </div>
    <div className="flex min-w-0 flex-1 flex-col">
      <PageHeader title="View Pages" />
      <PageTabs tabs={['View', 'Multi-Section', 'Slices', 'Grid']} gap="mr-[9px] ml-[6px]" />
      <div className="pt-px" />
      <PageHeader title="Part Pages" open pinned />
      <PageTabs tabs={['Part List', 'Part Info', 'Part Fixing Info', 'Scenes']} gap="mr-[7px] ml-[5px]" />
      <p className="h-[9px] pr-[3px] text-right">Number of parts:</p>
      <PartTable />
      <div className="flex h-[20px] items-center border-t border-[#9a9a9a]">
        {pageTools.map((art, i) =>
          art ? (
            <button key={i} aria-label={`Part tool ${i + 1}`} className="mr-px ml-[2px]">
              <Svg size="w-[14px] h-[14px]">{art}</Svg>
            </button>
          ) : (
            <span key={i} className="mx-px h-[13px] w-px bg-[#c4c4c4]" />
          )
        )}
      </div>
      <PageHeader title="Annotation Pages" />
      <PageTabs tabs={['Text', 'Drawing', 'Attachments', 'Textures']} gap="mr-[7px] ml-[5px]" />
      <div className="pt-px" />
      <PageHeader title="Measurement Pages" />
      <PageTabs tabs={['Distance', 'Radius', 'Angle', 'Info', 'Final Part']} gap="mr-[7px] ml-[5px]">
        <button aria-label="Scroll tabs left" className="ml-auto w-[9px] border border-[#cfcfcf]">◂</button>
        <button aria-label="Scroll tabs right" className="w-[5px]">▸</button>
      </PageTabs>
    </div>
  </aside>
);

const MagicsWindow = () => (
  <div className="self-center overflow-hidden rounded-tr-md rounded-br-md bg-black pt-[5px] pl-1">
    <div className="bg-white font-['Noto_Sans',sans-serif]">
      <QuickAccessBar />
      <RibbonTabs />
      <Ribbon />
      <div className="flex">
        <MarkingToolbar />
        <Viewport />
        <DockedPages />
      </div>
      <p className="bg-[#3090ef] pl-[3px] text-[5px] leading-[7px] text-[#cfe6ff]">Ready</p>
    </div>
  </div>
);

/* ---------- fix wizard ---------- */

const Magnifier = ({ handle = '#a8a258', size = 'w-[38px] h-[38px]' }) => (
  <svg viewBox="0 0 38 38" className={`${size} shrink-0`}>
    <path d="M16 21 4 34" stroke="#6f7340" strokeWidth="7" strokeLinecap="round" />
    <path d="M15.500 21.500 4 34" stroke={handle} strokeWidth="5" strokeLinecap="round" />
    <path d="M18 19l-4 4" stroke="#a9c4dd" strokeWidth="5" />
    <circle cx="25" cy="12.500" r="11" fill="#8fc4ee" stroke="#4b87bd" strokeWidth="2.500" />
    <circle cx="25" cy="10.500" r="6.500" fill="#c8e5fa" opacity=".8" />
    <path d="M17.500 15a8 8 0 0 0 15 0" stroke="#5fa0d6" strokeWidth="2" fill="none" />
  </svg>
);

const Block = ({ top = '#c0c6ee', left = '#c9d6f3', right = '#8f95dc', edge = '#4b5578', children }) => (
  <svg viewBox="0 0 38 40" className="h-10 w-[38px] shrink-0">
    <path d="M1 6 20 1 37 7 18 13Z" fill={top} />
    <path d="M1 6 18 13V39L1 28Z" fill={left} />
    <path d="M18 13 37 7V32L18 39Z" fill={right} />
    <path d="M1 6 20 1 37 7V32L18 39 1 28Z" fill="none" stroke={edge} strokeWidth="1.500" strokeLinejoin="round" />
    <path d="M2 7 18 13.500 36 8M18 13.500V38" fill="none" stroke="#eef1fb" strokeWidth="2" />
    {children}
  </svg>
);

const noiseDots = [[5, 8], [23, 4], [20, 16], [33, 20], [11, 24], [23, 31], [35, 32]];

const wizardPages = [
  { label: 'Diagnostics', icon: <Magnifier /> },
  {
    label: 'Combined Fix',
    icon: (
      <svg viewBox="0 0 38 38" className="h-[38px] w-[38px] shrink-0">
        {[[14, 3], [10, 6], [6, 10]].map(([x, y]) => (
          <path key={x} d={`M${x} ${y}l18 4v20l-2 1L${x} ${y + 20}Z`} fill="#cddaf5" stroke="#7a86b8" strokeWidth="1.500" />
        ))}
        <path d="M24 14l5-3v21l-5 3Z" fill="#9aa6df" />
      </svg>
    ),
  },
  null,
  {
    label: 'Normals',
    icon: (
      <Block right="#c62f2f">
        <path d="M30 13l5-2v18l-8 5Z" fill="#dd5a50" opacity=".5" />
      </Block>
    ),
  },
  {
    label: 'Stitching',
    icon: (
      <Block>
        <path d="M17 12 33 5l3 2-2 4-4-1-10 6-3-1Z" fill="#f2df3a" stroke="#8d8427" />
      </Block>
    ),
  },
  {
    label: 'Noise Shells',
    icon: (
      <Block right="#a9b0e4">
        {noiseDots.map(([x, y]) => (
          <g key={`${x}-${y}`}>
            <circle cx={x} cy={y} r="3.800" fill="#1b232c" />
            <circle cx={x - 1} cy={y - 1} r="1.300" fill="#7d9bb0" />
          </g>
        ))}
      </Block>
    ),
  },
  {
    label: 'Holes',
    icon: (
      <Block>
        <path d="M4 6 20 2 34 7 18 12Z" fill="#c41f3a" stroke="#5a2430" />
      </Block>
    ),
  },
  {
    label: 'Triangles',
    icon: (
      <Block left="#b9b8ea" right="#d5d4f4" edge="#3a348c">
        <path d="M2 7 20 39 36 8M20 1v12M18 13 2 7M18 13l18-5M20 14v24" fill="none" stroke="#3a348c" strokeWidth="1.800" />
      </Block>
    ),
  },
  {
    label: 'Overlaps',
    icon: (
      <Block left="#b4c8ee">
        <path d="M19 16 37 12V34L20 39Z" fill="#8f95dc" stroke="#5f74b5" strokeWidth="1.500" />
        <path d="M12 12 19 15V38L12 34ZM19 15l13-5" fill="#9db4e6" stroke="#5f74b5" strokeWidth="1.500" />
      </Block>
    ),
  },
  { label: 'Shells', icon: <Block /> },
  null,
  {
    label: 'Profiles',
    icon: (
      <svg viewBox="0 0 38 38" className="h-[38px] w-[38px] shrink-0">
        <path d="M11 1h13l10 9v27H11Z" fill="#a8e2f2" stroke="#3c8fae" strokeWidth="2" />
        <path d="M12 2h11v9h10v23H12Z" fill="#ddf5fb" />
        <path d="M24 1v9h10Z" fill="#fff" stroke="#3c8fae" />
        <path d="M15 19h12M15 23h12M15 27h12" stroke="#1e7596" strokeWidth="2" />
        <path d="M33 11v25H11" fill="none" stroke="#1583a8" strokeWidth="2.500" />
      </svg>
    ),
  },
];

const Sidebar = () => {
  const [active, setActive] = useState('Diagnostics');

  return (
    <nav className="w-[241px] shrink-0 border-2 border-b-0 border-[#999] bg-white pt-px pl-[2px]">
      <div className="h-full border-t border-l-2 border-[#777] pr-[9px]">
        {wizardPages.map((page, i) =>
          page ? (
            <button
              key={page.label}
              onClick={() => setActive(page.label)}
              className="flex h-[42px] w-full items-center pl-[7px] text-left text-[22px] leading-10"
            >
              <span className="flex w-[41px] shrink-0">{page.icon}</span>
              <span className={`h-10 flex-1 pl-1 ${active === page.label ? 'bg-[#efefef]' : ''}`}>
                {page.label}
              </span>
            </button>
          ) : (
            <div key={i} className="flex h-[42px] items-center">
              <hr className="w-full border-t-2 border-[#7a7a7a]" />
            </div>
          )
        )}
      </div>
    </nav>
  );
};

const Checkbox = ({ id, checked, onChange }) => (
  <span className="grid h-[26px] w-[26px] shrink-0">
    <input
      id={id}
      type="checkbox"
      checked={checked}
      onChange={onChange}
      className="col-start-1 row-start-1 appearance-none rounded-[5px] border-2 border-[#7b7b7b] bg-[#f6f6f6] checked:border-[#0f5fb5] checked:bg-[#0f5fb5]"
    />
    {checked && (
      <svg viewBox="0 0 26 26" className="pointer-events-none col-start-1 row-start-1">
        <path d="M7 13.500 11 17.500 19 9.500" fill="none" stroke="#d6e8fa" strokeWidth="1.600" />
      </svg>
    )}
  </span>
);

const Tick = () => (
  <svg viewBox="0 0 32 32" className="h-8 w-8">
    <defs>
      <linearGradient id="tick" x1="0" y1="0" x2="1" y2="1">
        <stop offset="0" stopColor="#2f7d4f" />
        <stop offset=".45" stopColor="#1f9a49" />
        <stop offset="1" stopColor="#1a7a40" />
      </linearGradient>
    </defs>
    <path
      d="M.500 7.500 5 12Q8.500 13.500 10.500 18.500 18 7 32 .500 31 3 29 6L12 29Q10 32 8.500 31 5 22 1 13Z"
      fill="url(#tick)"
      stroke="#3a7d58"
      strokeWidth=".8"
    />
  </svg>
);

const checks = [
  { id: 'normals', label: 'inverted normals detected', count: '0', box: true, on: true },
  { id: 'edges', label: 'bad edges detected', count: '0', box: true, on: true },
  { id: 'contours', label: 'bad contours detected', count: '0', nested: true },
  { id: 'near-edges', label: 'near bad edges detected', count: '0', box: true, on: true, nested: true },
  { id: 'planar', label: 'planar holes detected', count: '0', box: true, on: true, nested: true },
  { id: 'shells', label: 'shells detected', count: '1', box: true, on: true },
  { id: 'noise', label: 'possible noise shells detected', count: '0', nested: true },
  { id: 'overlapping', label: 'overlapping triangles detected', box: true },
  { id: 'intersecting', label: 'intersecting triangles detected', box: true },
];

const initialChecks = Object.fromEntries(checks.map(({ id, on }) => [id, Boolean(on)]));

const Diagnostics = () => {
  const [enabled, setEnabled] = useState(initialChecks);
  const [full, setFull] = useState(false);

  const toggle = (id) => setEnabled((prev) => ({ ...prev, [id]: !prev[id] }));

  return (
    <fieldset className="mt-[10px] border-2 border-[#dcdcdc] pr-[18px] pb-[15px] pl-[18px]">
      <legend className="-ml-2 px-[6px] leading-7">Diagnostics</legend>
      <div className="mt-[13px] flex h-7 items-center gap-[6px]">
        <Checkbox id="full-analysis" checked={full} onChange={() => setFull(!full)} />
        <label htmlFor="full-analysis">Full Analysis</label>
      </div>

      <ul className="mt-[25px] pl-[39px]">
        {checks.map(({ id, label, count, box, nested }) => (
          <li key={id} className={`flex h-10 items-center ${nested ? 'ml-10' : ''}`}>
            <span className="flex w-[39px] shrink-0">
              {box && <Checkbox id={id} checked={enabled[id]} onChange={() => toggle(id)} />}
            </span>
            <span className="grid w-8 shrink-0 place-items-center">
              {count ? <Tick /> : <span className="h-[7px] w-[7px] rounded-full bg-[#2424c4]" />}
            </span>
            <b className="w-[97px] shrink-0 pl-[9px]">{count}</b>
            {box ? <label htmlFor={id}>{label}</label> : <span>{label}</span>}
          </li>
        ))}
      </ul>

      <button className="mt-[21px] ml-auto flex h-12 w-[197px] rounded-lg border-2 border-[#2f7fbf] bg-[#fdfdfd] p-1">
        <span className="flex h-full w-full items-center border-2 border-dotted border-[#333]">
          <Magnifier handle="#e0ad3e" size="w-[36px] h-[36px]" />
          <span className="flex-1 pr-1 text-center">Update</span>
        </span>
      </button>
    </fieldset>
  );
};

const Advice = () => (
  <fieldset className="border-2 border-[#dcdcdc] pt-3 pr-[18px] pb-[15px] pl-[22px]">
    <legend className="-ml-3 px-[6px] leading-7">Advice</legend>
    <div className="flex h-[92px] justify-between">
      <p className="text-[21px] leading-[26px]">
        No more errors are detected. It seems that the part is ok.
        <br />
        Note that not all parameters were analysed.
      </p>
      <div className="flex w-8 shrink-0 flex-col items-center justify-between bg-[#efefef] py-[10px]">
        <button aria-label="Scroll up">
          <svg viewBox="0 0 16 13" className="h-[13px] w-4">
            <path d="M8 0 16 10V13H0V10Z" fill="#a3a3a3" />
          </svg>
        </button>
        <button aria-label="Scroll down">
          <svg viewBox="0 0 16 13" className="h-[13px] w-4">
            <path d="M8 13 16 3V0H0V3Z" fill="#a3a3a3" />
          </svg>
        </button>
      </div>
    </div>
  </fieldset>
);

const TitleBar = () => (
  <header className="flex h-[60px] items-center bg-[#eef3fc] pr-[34px] pb-[2px] pl-[18px]">
    <svg viewBox="0 0 28 28" className="h-7 w-7 shrink-0">
      <path d="M9 1h11l-1 8 8-1v10l-8 1v8H9v-8H1V9h8Z" fill="#e8120c" />
      <path d="M18 1l2 1-1 7M19 19v8h-3M27 8v10l-8 1" fill="none" stroke="#9c0d0a" strokeWidth="2" />
    </svg>
    <h1 className="ml-3 text-[23px] leading-7">Fix Wizard (Part: AV Designe 221 stl 2) &gt; Diagnostics</h1>
    <div className="ml-auto flex gap-[70px]">
      <button aria-label="Minimize">
        <svg viewBox="0 0 20 20" className="h-5 w-5"><path d="M0 11h20" stroke="#222" strokeWidth="2" /></svg>
      </button>
      <button aria-label="Maximize" disabled>
        <svg viewBox="0 0 20 20" className="h-5 w-5">
          <rect x="1" y="1" width="18" height="18" rx="1" fill="none" stroke="#c3c6ce" strokeWidth="2" />
        </svg>
      </button>
      <button aria-label="Close">
        <svg viewBox="0 0 20 20" className="h-5 w-5"><path d="M0 0l20 20M20 0 0 20" stroke="#222" strokeWidth="2" /></svg>
      </button>
    </div>
  </header>
);

const FixWizard = () => (
  <div className="flex flex-col overflow-hidden rounded-t-[14px] rounded-b-sm bg-[#f0f0f0] font-['Noto_Sans',sans-serif] text-xl text-[#1a1a1a]">
    <TitleBar />
    <div className="flex flex-1 pt-[9px] pl-2">
      <Sidebar />
      <main className="min-w-0 flex-1 pl-4">
        <div className="flex items-start pr-[10px] pl-[9px]">
          <label htmlFor="part" className="w-[145px] shrink-0 leading-6">Current Part:</label>
          <div className="grid h-10 min-w-0 flex-1 items-center">
            <select
              id="part"
              className="col-start-1 row-start-1 h-10 w-full appearance-none rounded-[3px] border-2 border-[#cfcfcf] bg-white pl-[6px] text-[21px] leading-7"
            >
              <option>AV Designe 221 stl 2</option>
            </select>
            <svg viewBox="0 0 16 10" className="pointer-events-none col-start-1 row-start-1 mr-[10px] h-[10px] w-4 justify-self-end">
              <path d="M1 1l7 7 7-7" fill="none" stroke="#777" strokeWidth="1.800" />
            </svg>
          </div>
          <button disabled className="mt-[2px] ml-3 h-[42px] w-[84px] rounded-md border-2 border-[#e8e8e8] bg-[#f8f8f8] text-[#999]">
            Next
          </button>
        </div>

        <div className="mt-5 mr-[14px] rounded-md border-2 border-[#adadad] bg-linear-to-b from-white to-[#f0f0f0] px-[18px] pt-[37px] pb-5">
          <Advice />
          <Diagnostics />
        </div>
      </main>
    </div>
  </div>
);

const App = () => (
  <div className="grid min-h-screen grid-cols-[1405fr_976fr] gap-[42px] bg-[#1b2227] bg-[radial-gradient(ellipse_45%_60%_at_54%_100%,#1b1c33,transparent)] pt-12 pr-[68px] pb-[43px] pl-[69px]">
    <MagicsWindow />
    <FixWizard />
  </div>
);

export default App;
